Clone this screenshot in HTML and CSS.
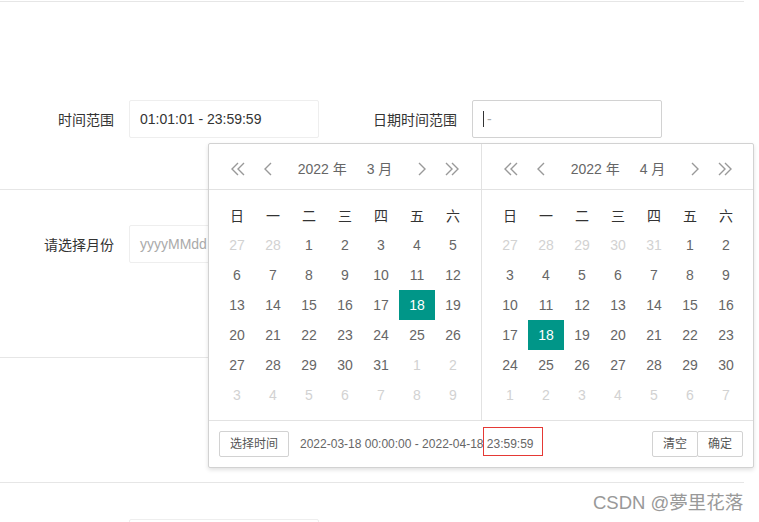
FILE: index.html
```html
<!DOCTYPE html>
<html lang="zh-CN">
<head>
<meta charset="utf-8">
<title>laydate</title>
<link rel="stylesheet" href="styles.css">
</head>
<body>
<div class="page">
  <div class="sep"></div>
  <div class="block block-1">
    <div class="form-row">
      <div class="item">
        <label class="label">时间范围</label>
        <div class="input"><span class="val">01:01:01 - 23:59:59</span></div>
      </div>
      <div class="item item-2">
        <label class="label">日期时间范围</label>
        <div class="input focus"><span class="caret"></span><span class="ph">-</span></div>
      </div>
    </div>
  </div>
  <div class="sep"></div>
  <div class="block block-2">
    <div class="form-row">
      <div class="item">
        <label class="label">请选择月份</label>
        <div class="input"><span class="ph">yyyyMMdd</span></div>
      </div>
    </div>
  </div>
  <div class="sep"></div>
  <div class="block block-3"></div>
  <div class="sep"></div>
  <div class="block block-4">
    <div class="form-row">
      <div class="item">
        <div class="label"></div>
        <div class="input"></div>
      </div>
    </div>
  </div>

  <div class="watermark">CSDN @夢里花落</div>

  <div class="laydate">
    <div class="panels">
      <div class="main">
        <div class="header">
          <div class="nav">
            <span class="ico"><svg width="16" height="14" viewBox="0 0 16 14"><path d="M8 1 L2 7 L8 13 M14 1 L8 7 L14 13" fill="none" stroke="#999" stroke-width="1.4"/></svg></span>
            <span class="ico"><svg width="8" height="14" viewBox="0 0 8 14"><path d="M7 1 L1 7 L7 13" fill="none" stroke="#999" stroke-width="1.4"/></svg></span>
          </div>
          <div class="ym"><span>2022 年</span><span>3 月</span></div>
          <div class="nav">
            <span class="ico"><svg width="8" height="14" viewBox="0 0 8 14"><path d="M1 1 L7 7 L1 13" fill="none" stroke="#999" stroke-width="1.4"/></svg></span>
            <span class="ico"><svg width="16" height="14" viewBox="0 0 16 14"><path d="M2 1 L8 7 L2 13 M8 1 L14 7 L8 13" fill="none" stroke="#999" stroke-width="1.4"/></svg></span>
          </div>
        </div>
        <div class="content">
          <div class="grid">
            <span class="th">日</span><span class="th">一</span><span class="th">二</span><span class="th">三</span><span class="th">四</span><span class="th">五</span><span class="th">六</span>
            <span class="off">27</span><span class="off">28</span><span>1</span><span>2</span><span>3</span><span>4</span><span>5</span>
            <span>6</span><span>7</span><span>8</span><span>9</span><span>10</span><span>11</span><span>12</span>
            <span>13</span><span>14</span><span>15</span><span>16</span><span>17</span><span class="sel">18</span><span>19</span>
            <span>20</span><span>21</span><span>22</span><span>23</span><span>24</span><span>25</span><span>26</span>
            <span>27</span><span>28</span><span>29</span><span>30</span><span>31</span><span class="off">1</span><span class="off">2</span>
            <span class="off">3</span><span class="off">4</span><span class="off">5</span><span class="off">6</span><span class="off">7</span><span class="off">8</span><span class="off">9</span>
          </div>
        </div>
      </div>
      <div class="main main-2">
        <div class="header">
          <div class="nav">
            <span class="ico"><svg width="16" height="14" viewBox="0 0 16 14"><path d="M8 1 L2 7 L8 13 M14 1 L8 7 L14 13" fill="none" stroke="#999" stroke-width="1.4"/></svg></span>
            <span class="ico"><svg width="8" height="14" viewBox="0 0 8 14"><path d="M7 1 L1 7 L7 13" fill="none" stroke="#999" stroke-width="1.4"/></svg></span>
          </div>
          <div class="ym"><span>2022 年</span><span>4 月</span></div>
          <div class="nav">
            <span class="ico"><svg width="8" height="14" viewBox="0 0 8 14"><path d="M1 1 L7 7 L1 13" fill="none" stroke="#999" stroke-width="1.4"/></svg></span>
            <span class="ico"><svg width="16" height="14" viewBox="0 0 16 14"><path d="M2 1 L8 7 L2 13 M8 1 L14 7 L8 13" fill="none" stroke="#999" stroke-width="1.4"/></svg></span>
          </div>
        </div>
        <div class="content">
          <div class="grid">
            <span class="th">日</span><span class="th">一</span><span class="th">二</span><span class="th">三</span><span class="th">四</span><span class="th">五</span><span class="th">六</span>
            <span class="off">27</span><span class="off">28</span><span class="off">29</span><span class="off">30</span><span class="off">31</span><span>1</span><span>2</span>
            <span>3</span><span>4</span><span>5</span><span>6</span><span>7</span><span>8</span><span>9</span>
            <span>10</span><span>11</span><span>12</span><span>13</span><span>14</span><span>15</span><span>16</span>
            <span>17</span><span class="sel">18</span><span>19</span><span>20</span><span>21</span><span>22</span><span>23</span>
            <span>24</span><span>25</span><span>26</span><span>27</span><span>28</span><span>29</span><span>30</span>
            <span class="off">1</span><span class="off">2</span><span class="off">3</span><span class="off">4</span><span class="off">5</span><span class="off">6</span><span class="off">7</span>
          </div>
        </div>
      </div>
    </div>
    <div class="footer">
      <span class="btn">选择时间</span>
      <span class="range-text">2022-03-18 00:00:00 - 2022-04-18 23:59:59</span>
      <div class="btns"><span class="btn">清空</span><span class="btn">确定</span></div>
      <div class="mark"></div>
    </div>
  </div>
</div>
</body>
</html>
```

FILE: styles.css
```css
html, body {
  margin: 0;
  padding: 0;
  background: #fff;
  overflow: hidden;
}
body {
  font-family: "Liberation Sans", Arial, "Noto Sans CJK SC", sans-serif;
  font-size: 14px;
  color: #333;
}
.page {
  position: relative;
  height: 521px;
  padding-top: 1px;
  overflow: hidden;
}
.sep {
  width: 744px;
  height: 1px;
  background: #e6e6e6;
}
.block { width: 744px; }
.block-1 { padding: 98px 0 51px; }
.block-2 { padding: 35px 0 94px; }
.block-3 { height: 124px; }
.block-4 { padding-top: 36px; }

.form-row {
  display: flex;
  padding-left: 19px;
}
.item {
  display: flex;
  align-items: center;
}
.item-2 { margin-left: 43px; }
.label {
  width: 110px;
  box-sizing: border-box;
  padding-right: 15px;
  text-align: right;
  color: #333;
}
.input {
  width: 190px;
  height: 38px;
  box-sizing: border-box;
  border: 1px solid #eee;
  border-radius: 2px;
  padding-left: 10px;
  display: flex;
  align-items: center;
  color: #333;
}
.input.focus { border-color: #d2d2d2; }
.caret {
  width: 1px;
  height: 16px;
  background: #333;
  margin-right: 3px;
}
.ph { color: #aaa; }

.watermark {
  position: absolute;
  left: 593px;
  top: 492px;
  font-size: 18.5px;
  color: #999;
  line-height: 22px;
  white-space: nowrap;
}

.laydate {
  position: absolute;
  left: 208px;
  top: 143px;
  border: 1px solid #d2d2d2;
  border-radius: 2px;
  background: #fff;
  box-shadow: 0 2px 4px rgba(0, 0, 0, .12);
}
.panels { display: flex; }
.main { width: 272px; }
.main-2 {
  width: 271px;
  border-left: 1px solid #e2e2e2;
}
.header {
  height: 30px;
  padding: 10px 14px 5px;
  border-bottom: 1px solid #e2e2e2;
  display: flex;
  align-items: center;
  justify-content: space-between;
  line-height: 30px;
}
.main-2 .header { padding-right: 13px; }
.nav { display: flex; }
.ico {
  width: 30px;
  height: 30px;
  display: flex;
  align-items: center;
  justify-content: center;
}
.ym {
  display: flex;
  color: #666;
}
.ym span { padding: 0 10px; }
.content { padding: 10px; }
.main-2 .content { padding-right: 9px; }
.grid {
  display: grid;
  grid-template-columns: repeat(7, 36px);
  grid-auto-rows: 30px;
}
.grid span {
  display: flex;
  align-items: center;
  justify-content: center;
  color: #666;
}
.grid .th { color: #333; }
.grid .off { color: #d2d2d2; }
.grid .sel {
  background: #009688;
  color: #fff;
}
.footer {
  position: relative;
  height: 26px;
  padding: 10px;
  border-top: 1px solid #e2e2e2;
  display: flex;
  align-items: center;
  font-size: 12px;
  line-height: 24px;
}
.btn {
  display: inline-block;
  height: 24px;
  padding: 0 10px;
  border: 1px solid #d2d2d2;
  border-radius: 2px;
  color: #555;
  background: #fff;
}
.range-text {
  margin-left: 11px;
  color: #666;
}
.btns {
  margin-left: auto;
  display: flex;
}
.btns .btn + .btn { margin-left: -1px; }
.mark {
  position: absolute;
  left: 274px;
  top: 6px;
  width: 58px;
  height: 27px;
  border: 1px solid #e53935;
}
```
